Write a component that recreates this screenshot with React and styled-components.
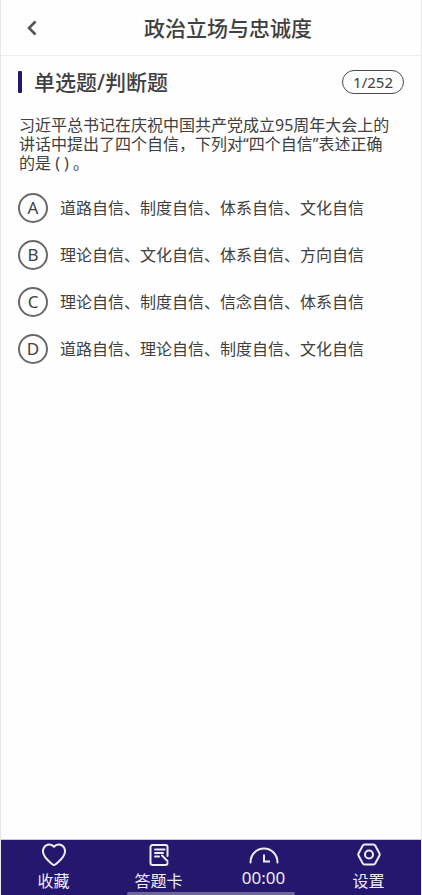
import React, { useState } from "react";
import styled, { createGlobalStyle } from "styled-components";

const GlobalStyle = createGlobalStyle`
  * {
    box-sizing: border-box;
  }

  body {
    margin: 0;
    background: #fefefe;
    color: #404040;
    font-family: "Noto Sans", "Noto Sans CJK SC", sans-serif;
  }

  button,
  input {
    font: inherit;
    color: inherit;
  }
`;

const Page = styled.div`
  display: flex;
  flex-direction: column;
  min-height: 100vh;
  border: solid #e8e8ea;
  border-width: 0 1px;
`;

const Header = styled.header`
  display: grid;
  grid-template-columns: 62px 1fr 28px;
  align-items: center;
  height: 56px;
  border-bottom: 1px solid #eeeeee;
`;

const BackButton = styled.button`
  display: flex;
  justify-content: center;
  padding: 8px 0;
  border: 0;
  background: none;
  color: #555555;
  cursor: pointer;
`;

const Title = styled.h1`
  margin: 0;
  font-size: 21px;
  line-height: 28px;
  font-weight: 500;
  text-align: center;
`;

const Main = styled.main`
  flex: 1;
  padding: 12px 17px;
`;

const SectionHead = styled.div`
  display: flex;
  align-items: center;
  justify-content: space-between;
  margin-bottom: 20px;
`;

const SectionTitle = styled.h2`
  display: flex;
  align-items: center;
  gap: 12px;
  margin: 0;
  font-size: 21px;
  line-height: 28px;
  font-weight: 500;

  &::before {
    content: "";
    width: 4px;
    height: 22px;
    border-radius: 1px;
    background: #25176e;
  }
`;

const Counter = styled.span`
  padding: 0 10px;
  border: 1px solid #4a4a4a;
  border-radius: 12px;
  font-size: 15px;
  line-height: 22px;
`;

const Question = styled.fieldset`
  min-width: 0;
  margin: 0;
  padding: 0;
  border: 0;
`;

const QuestionText = styled.legend`
  padding: 0 8px 0 1px;
  margin-bottom: 20px;
  font-size: 16px;
  line-height: 19px;
`;

const Options = styled.div`
  display: flex;
  flex-direction: column;
  gap: 17px;
`;

const Option = styled.label`
  display: grid;
  grid-template-columns: 30px 1fr;
  column-gap: 12px;
  align-items: center;
  font-size: 16px;
  line-height: 24px;
  cursor: pointer;
`;

const Radio = styled.input`
  appearance: none;
  grid-area: 1 / 1;
  width: 30px;
  height: 30px;
  margin: 0;
  border: 2px solid #696969;
  border-radius: 50%;

  &:checked {
    border-color: #25176e;
    background: #e6e3f5;
  }
`;

const Letter = styled.span`
  grid-area: 1 / 1;
  font-size: 17px;
  text-align: center;
`;

const TabBar = styled.nav`
  position: relative;
  display: grid;
  grid-template-columns: repeat(4, 1fr);
  height: 56px;
  border-top: 1px solid #c9c6dc;
  background: #25176e;
`;

const Tab = styled.button`
  display: flex;
  flex-direction: column;
  align-items: center;
  gap: 1px;
  padding: 2px 0 0;
  border: 0;
  background: none;
  color: #efedf8;
  font-size: ${(props) => (props.$numeric ? "17px" : "16px")};
  line-height: 24px;
  cursor: pointer;
`;

const HomeIndicator = styled.span`
  position: absolute;
  bottom: 0;
  left: 30%;
  right: 30%;
  height: 3px;
  border-radius: 2px;
  background: #6e6699;
`;

const Icon = ({ width = 26, height = 26, children }) => (
  <svg
    width={width}
    height={height}
    viewBox={`0 0 ${width} ${height}`}
    fill="none"
    stroke="currentColor"
    strokeWidth="2"
    strokeLinecap="round"
    strokeLinejoin="round"
    aria-hidden="true"
  >
    {children}
  </svg>
);

const HeartIcon = () => (
  <Icon>
    <path d="M13 4.800C10.800 1.800 5.500 1.500 3 5.500C.7 9.500 2.800 13.800 6 17.200C8.300 19.600 11.200 23 13 23S17.700 19.600 20 17.200C23.200 13.800 25.300 9.500 23 5.500C20.500 1.500 15.200 1.800 13 4.800Z" />
  </Icon>
);

const SheetIcon = () => (
  <Icon>
    <path d="M21.500 14V5a2 2 0 0 0-2-2h-13a2 2 0 0 0-2 2v16a2 2 0 0 0 2 2h13a2 2 0 0 0 2-2" />
    <path d="M9 7.500h9.500M9 11h8M9 14.500h4M16 13.500l5.500 5.500" />
  </Icon>
);

const TimerIcon = () => (
  <Icon width={30} height={23}>
    <path d="M1.500 20.500C1.500 12.500 7.500 6.500 15 6.500S28.500 12.500 28.500 20.500" />
    <path d="M15 12.500v7h6" strokeLinecap="butt" strokeLinejoin="miter" />
  </Icon>
);

const SettingsIcon = () => (
  <Icon>
    <path d="M8.500 2.500h9a2 2 0 0 1 1.700 1L23.500 11.500a2 2 0 0 1 0 2L19.200 21.500a2 2 0 0 1-1.700 1h-9a2 2 0 0 1-1.700-1L2.500 13.500a2 2 0 0 1 0-2L6.800 3.500a2 2 0 0 1 1.700-1Z" />
    <circle cx="13" cy="12.500" r="4" />
  </Icon>
);

const options = [
  { letter: "A", text: "道路自信、制度自信、体系自信、文化自信" },
  { letter: "B", text: "理论自信、文化自信、体系自信、方向自信" },
  { letter: "C", text: "理论自信、制度自信、信念自信、体系自信" },
  { letter: "D", text: "道路自信、理论自信、制度自信、文化自信" },
];

const tabs = [
  { label: "收藏", icon: HeartIcon },
  { label: "答题卡", icon: SheetIcon },
  { label: "00:00", icon: TimerIcon, numeric: true },
  { label: "设置", icon: SettingsIcon },
];

function App() {
  const [answer, setAnswer] = useState(null);

  return (
    <Page lang="zh-CN">
      <GlobalStyle />
      <Header>
        <BackButton aria-label="返回">
          <svg width="12" height="18" viewBox="0 0 12 18" fill="none" aria-hidden="true">
            <path d="M9.500 2.500L3 9l6.500 6.500" stroke="currentColor" strokeWidth="2.600" />
          </svg>
        </BackButton>
        <Title>政治立场与忠诚度</Title>
      </Header>
      <Main>
        <SectionHead>
          <SectionTitle>单选题/判断题</SectionTitle>
          <Counter>1/252</Counter>
        </SectionHead>
        <Question>
          <QuestionText>
            习近平总书记在庆祝中国共产党成立95周年大会上的讲话中提出了四个自信，下列对“四个自信”表述正确的是 ( ) 。
          </QuestionText>
          <Options>
            {options.map(({ letter, text }) => (
              <Option key={letter}>
                <Radio
                  type="radio"
                  name="answer"
                  value={letter}
                  checked={answer === letter}
                  onChange={() => setAnswer(letter)}
                />
                <Letter>{letter}</Letter>
                <span>{text}</span>
              </Option>
            ))}
          </Options>
        </Question>
      </Main>
      <TabBar>
        {tabs.map(({ label, icon: TabIcon, numeric }) => (
          <Tab key={label} $numeric={numeric}>
            <TabIcon />
            <span>{label}</span>
          </Tab>
        ))}
        <HomeIndicator />
      </TabBar>
    </Page>
  );
}

export default App;
